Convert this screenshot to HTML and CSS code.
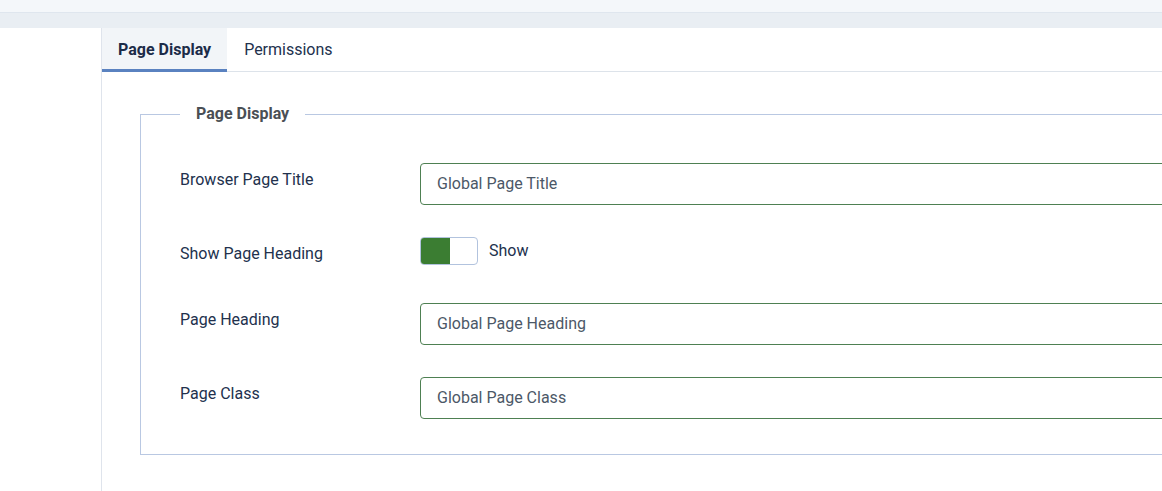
FILE: index.html
```html
<!DOCTYPE html>
<html lang="en">
<head>
<meta charset="utf-8">
<title>Page Display</title>
<link rel="stylesheet" href="styles.css">
</head>
<body>
<div class="topbar"></div>
<div class="subbar"></div>
<div class="main">
  <aside class="sidebar"></aside>
  <section class="content">
    <nav class="tabs">
      <div class="tab active">Page Display</div>
      <div class="tab">Permissions</div>
    </nav>
    <div class="panel">
      <fieldset class="group">
        <legend class="legend">Page Display</legend>
        <div class="row">
          <label class="label">Browser Page Title</label>
          <div class="input">Global Page Title</div>
        </div>
        <div class="row row-switch">
          <label class="label">Show Page Heading</label>
          <div class="switch-wrap">
            <span class="switch"><span class="switch-on"></span></span>
            <span class="switch-text">Show</span>
          </div>
        </div>
        <div class="row">
          <label class="label">Page Heading</label>
          <div class="input">Global Page Heading</div>
        </div>
        <div class="row">
          <label class="label">Page Class</label>
          <div class="input">Global Page Class</div>
        </div>
      </fieldset>
    </div>
  </section>
</div>
</body>
</html>
```
FILE: styles.css
```css
html, body {
  margin: 0;
  padding: 0;
  background: #ffffff;
  font-family: Roboto, "Liberation Sans", Arial, sans-serif;
  font-size: 16px;
  overflow: hidden;
}
.topbar {
  height: 12px;
  background: #f4f7fa;
  border-bottom: 1px solid #dfe6ee;
}
.subbar {
  height: 15px;
  background: #e9eef3;
}
.main {
  display: flex;
  height: 463px;
}
.sidebar {
  width: 101px;
  flex: none;
  border-right: 1px solid #dfe4ec;
}
.content {
  flex: 1;
  min-width: 0;
  overflow: hidden;
}
.tabs {
  display: flex;
  height: 43px;
  border-bottom: 1px solid #dde3ea;
}
.tab {
  display: flex;
  align-items: center;
  padding: 0 17px;
  color: #22314d;
  font-size: 16px;
  white-space: nowrap;
}
.tab.active {
  padding: 2px 16px 0 16px;
  background: #f2f5f8;
  border-bottom: 3px solid #5a82c0;
  margin-bottom: -1px;
  font-weight: 700;
  color: #1c2b48;
}
.panel {
  padding: 30px 0 0 38px;
}
.group {
  margin: 0;
  width: 1100px;
  border: 1px solid #b9c8e2;
  padding: 37px 39px 35px 39px;
  min-inline-size: 0;
}
.legend {
  padding: 0 16px;
  font-weight: 700;
  color: #4a4f55;
  line-height: 24px;
}
.row {
  display: flex;
  align-items: flex-start;
  margin-bottom: 32px;
}
.row:last-child {
  margin-bottom: 0;
}
.label {
  width: 240px;
  flex: none;
  padding-top: 5px;
  line-height: 24px;
  color: #22314d;
}
.input {
  flex: 1;
  height: 40px;
  border: 1px solid #4e8052;
  border-radius: 4px;
  padding: 0 0 2px 16px;
  box-sizing: border-box;
  height: 42px;
  display: flex;
  align-items: center;
  color: #4c5867;
}
.row-switch {
  height: 34px;
}
.switch-wrap {
  display: flex;
  align-items: center;
  gap: 11px;
  height: 28px;
}
.switch {
  display: block;
  width: 56px;
  height: 26px;
  border: 1px solid #b2c3de;
  border-radius: 4px;
  overflow: hidden;
}
.switch-on {
  display: block;
  width: 29px;
  height: 100%;
  background: #3b7d32;
}
.switch-text {
  color: #22314d;
  position: relative;
  top: -1px;
}
```
